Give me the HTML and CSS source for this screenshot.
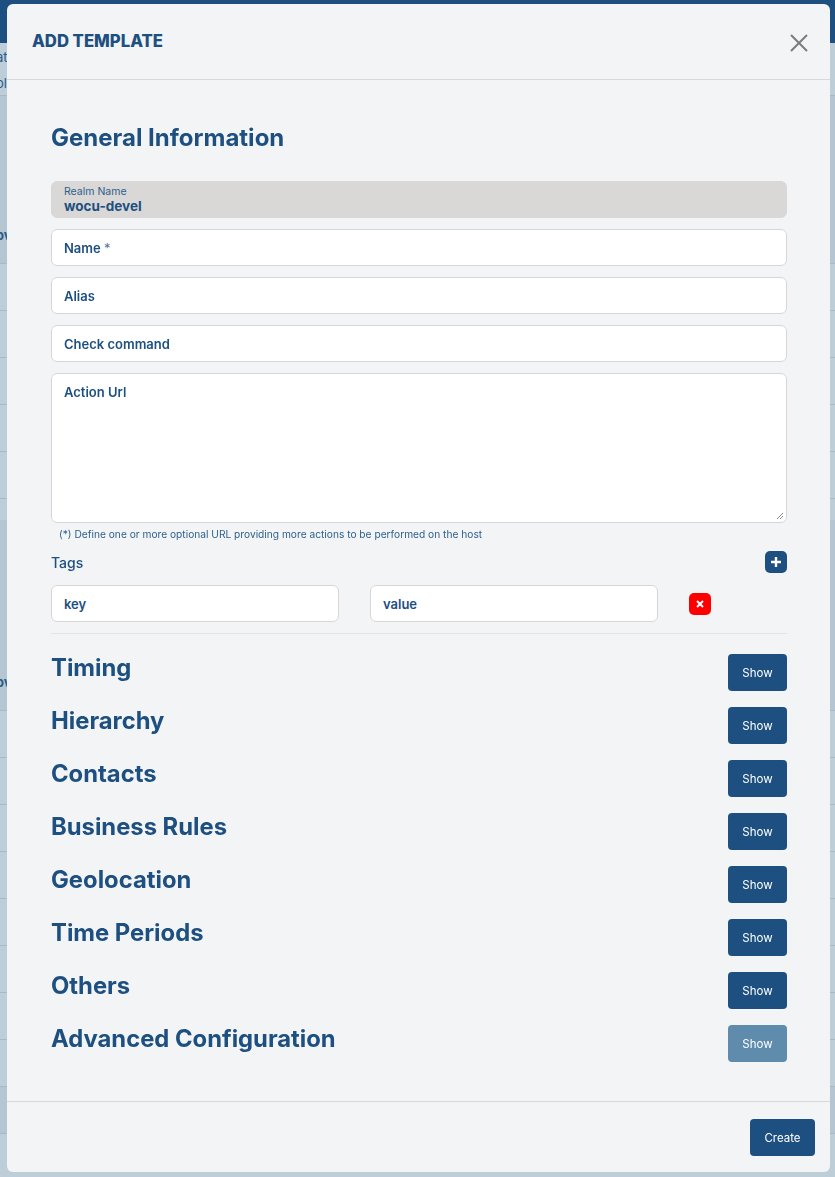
FILE: index.html
```html
<!DOCTYPE html>
<html lang="en">
<head>
    <meta charset="UTF-8">
    <meta name="viewport" content="width=device-width, initial-scale=1.0">
    <title>Add Template</title>
    <link rel="stylesheet" href="styles.css">
</head>
<body>
    <!-- Page behind the modal -->
    <div class="backdrop">
        <div class="topbar"></div>
        <div class="bg-row short"><span class="bg-text">at</span></div>
        <div class="bg-row short"><span class="bg-text">ol:</span></div>
        <div class="bg-row dark tall"><span class="bg-text low">ov</span></div>
        <div class="bg-row"></div>
        <div class="bg-row"></div>
        <div class="bg-row"></div>
        <div class="bg-row"></div>
        <div class="bg-row"></div>
        <div class="bg-row half"></div>
        <div class="bg-row dark tall2"><span class="bg-text low">ov</span></div>
        <div class="bg-row"></div>
        <div class="bg-row"></div>
        <div class="bg-row"></div>
        <div class="bg-row"></div>
        <div class="bg-row"></div>
        <div class="bg-row"></div>
        <div class="bg-row"></div>
        <div class="bg-row"></div>
        <div class="bg-row dark"></div>
    </div>

    <div class="modal">
        <div class="modal-header">
            <h2 class="modal-title">Add Template</h2>
            <button class="close" aria-label="Close">
                <svg width="18" height="18" viewBox="0 0 18 18">
                    <path d="M1 1 L17 17 M17 1 L1 17" stroke="#7b7b7b" stroke-width="2" fill="none"/>
                </svg>
            </button>
        </div>

        <div class="modal-body">
            <h3 class="section-title">General Information</h3>

            <div class="fields">
                <div class="field readonly">
                    <span class="field-label">Realm Name</span>
                    <span class="field-value">wocu-devel</span>
                </div>
                <div class="field"><span class="placeholder">Name <span class="req">*</span></span></div>
                <div class="field"><span class="placeholder">Alias</span></div>
                <div class="field"><span class="placeholder">Check command</span></div>
                <div class="field textarea">
                    <span class="placeholder">Action Url</span>
                    <svg class="grip" width="8" height="8" viewBox="0 0 8 8">
                        <path d="M7 1 L1 7 M7 4 L4 7" stroke="#8a8a8a" stroke-width="1" fill="none"/>
                    </svg>
                </div>
            </div>
            <p class="help">(*) Define one or more optional URL providing more actions to be performed on the host</p>

            <div class="tags-head">
                <span class="tags-title">Tags</span>
                <button class="icon-btn add">
                    <svg width="12" height="12" viewBox="0 0 12 12">
                        <path d="M6 1 V11 M1 6 H11" stroke="#fff" stroke-width="2.4" fill="none"/>
                    </svg>
                </button>
            </div>
            <div class="tags-row">
                <div class="field"><span class="placeholder">key</span></div>
                <div class="field"><span class="placeholder">value</span></div>
                <button class="icon-btn remove">
                    <svg width="10" height="10" viewBox="0 0 10 10">
                        <path d="M2 2 L8 8 M8 2 L2 8" stroke="#fff" stroke-width="2" fill="none"/>
                    </svg>
                </button>
            </div>

            <div class="sections">
                <div class="section-row"><h3 class="section-title">Timing</h3><button class="btn">Show</button></div>
                <div class="section-row"><h3 class="section-title">Hierarchy</h3><button class="btn">Show</button></div>
                <div class="section-row"><h3 class="section-title">Contacts</h3><button class="btn">Show</button></div>
                <div class="section-row"><h3 class="section-title">Business Rules</h3><button class="btn">Show</button></div>
                <div class="section-row"><h3 class="section-title">Geolocation</h3><button class="btn">Show</button></div>
                <div class="section-row"><h3 class="section-title">Time Periods</h3><button class="btn">Show</button></div>
                <div class="section-row"><h3 class="section-title">Others</h3><button class="btn">Show</button></div>
                <div class="section-row"><h3 class="section-title">Advanced Configuration</h3><button class="btn light">Show</button></div>
            </div>
        </div>

        <div class="modal-footer">
            <button class="btn create">Create</button>
        </div>
    </div>
</body>
</html>
```

FILE: styles.css
```css
body {
    margin: 0;
    padding: 0;
    font-family: Inter, "Open Sans", sans-serif;
    background-color: #bdced9;
    color: #1d4f80;
    height: 1177px;
    overflow: hidden;
}

/* Page behind the modal */
.backdrop {
    display: flex;
    flex-direction: column;
}

.topbar {
    height: 43px;
    background-color: #1d4f80;
}

.bg-row {
    height: 46px;
    border-bottom: 1px solid #a9b9c5;
    position: relative;
}

.bg-row.short {
    height: 26px;
    border-bottom: none;
}

.bg-row.dark {
    background-color: #b5c6d2;
}

.bg-row.tall {
    height: 167px;
    border-top: 1px solid #a9b9c5;
}

.bg-row.half {
    height: 21px;
    border-bottom: none;
}

.bg-row.tall2 {
    height: 190px;
}

.bg-text {
    position: absolute;
    left: -4px;
    top: 6px;
    font-size: 13px;
    color: #2a5b88;
}

.bg-text.low {
    top: auto;
    bottom: 20px;
    font-weight: bold;
}

/* Modal */
.modal {
    position: fixed;
    left: 7px;
    top: 4px;
    width: 823px;
    height: 1168px;
    background-color: #f3f4f6;
    border-radius: 6px;
    display: flex;
    flex-direction: column;
    box-sizing: border-box;
}

.modal-header {
    height: 76px;
    border-bottom: 1px solid #d8d8d8;
    display: flex;
    align-items: center;
    justify-content: space-between;
    padding: 0 22px 0 25px;
    box-sizing: border-box;
}

.modal-title {
    margin: 0 0 1px;
    font-size: 16.7px;
    font-weight: 800;
    text-transform: uppercase;
    color: #1d4f80;
}

.close {
    background: none;
    border: none;
    padding: 0;
    cursor: pointer;
    display: flex;
    margin-top: 2px;
}

.modal-body {
    flex: 1;
    padding: 43px 43px 0 44px;
}

.section-title {
    margin: 0;
    font-size: 24px;
    font-weight: 700;
    line-height: 30px;
    color: #1d4f80;
}

.modal-body > .section-title {
    margin-bottom: 28px;
}

.fields {
    display: flex;
    flex-direction: column;
    gap: 11px;
}

.field {
    height: 37px;
    box-sizing: border-box;
    background-color: #fff;
    border: 1px solid #d6d6d6;
    border-radius: 6px;
    padding: 0 12px;
    display: flex;
    align-items: center;
    position: relative;
}

.field.readonly {
    background-color: #d9d8d7;
    border-color: #d9d8d7;
    flex-direction: column;
    align-items: flex-start;
    justify-content: center;
    gap: 0;
}

.field-label {
    font-size: 10.5px;
    line-height: 12px;
    color: #2d5f8c;
}

.field-value {
    font-size: 13.5px;
    font-weight: 700;
    line-height: 16px;
    color: #1d4f80;
}

.placeholder {
    font-size: 13px;
    font-weight: 600;
    color: #1d4f80;
}

.req {
    font-weight: normal;
    color: #4d7399;
}

.field.textarea {
    height: 150px;
    align-items: flex-start;
    padding-top: 10px;
}

.grip {
    position: absolute;
    right: 2px;
    bottom: 2px;
}

.help {
    margin: 5px 0 0 8px;
    font-size: 10.2px;
    color: #2d5f8c;
}

.tags-head {
    display: flex;
    justify-content: space-between;
    align-items: center;
    margin-top: 11px;
}

.tags-title {
    font-size: 14px;
    font-weight: 500;
    color: #1d4f80;
}

.icon-btn {
    width: 22px;
    height: 22px;
    border: none;
    border-radius: 5px;
    padding: 0;
    display: flex;
    align-items: center;
    justify-content: center;
    cursor: pointer;
}

.icon-btn.add {
    background-color: #1d4f80;
}

.icon-btn.remove {
    background-color: #ff0000;
}

.tags-row {
    display: grid;
    grid-template-columns: 288px 288px 22px;
    column-gap: 31px;
    align-items: center;
    margin-top: 12px;
    padding-bottom: 11px;
    border-bottom: 1px solid #e1e3e6;
}

.sections {
    display: flex;
    flex-direction: column;
    gap: 16px;
    margin-top: 20px;
}

.section-row {
    display: flex;
    justify-content: space-between;
    align-items: flex-start;
}

.section-row .section-title {
    font-size: 23.8px;
    line-height: 28px;
}

.btn {
    height: 37px;
    width: 59px;
    border: none;
    border-radius: 4px;
    background-color: #1d5081;
    color: #fff;
    font-family: Inter, "Open Sans", sans-serif;
    font-size: 11.5px;
    cursor: pointer;
}

.btn.light {
    background-color: #5f8cad;
}

.modal-footer {
    height: 70px;
    border-top: 1px solid #d8d8d8;
    display: flex;
    justify-content: flex-end;
    align-items: center;
    padding: 0 15px;
}

.btn.create {
    width: 65px;
    margin-top: 1px;
}
```
